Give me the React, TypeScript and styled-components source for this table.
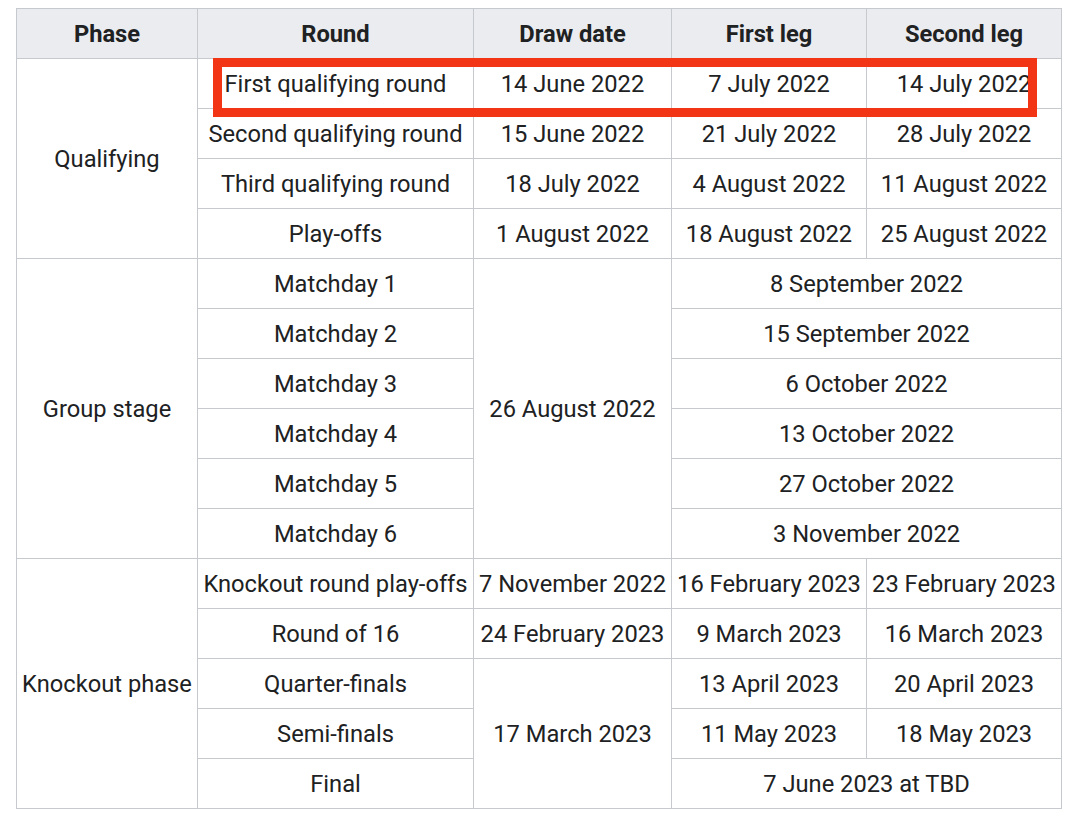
import React from "react";
import styled, { createGlobalStyle } from "styled-components";

const Global = createGlobalStyle`
  html, body { margin: 0; padding: 0; background: #ffffff; }
  body { font-family: Roboto, "Noto Sans", sans-serif; color: #202122; }
`;

const Page = styled.div`
  padding: 8px 0 0 16px;
`;

const Wrap = styled.div`
  position: relative;
  width: 1045px;
`;

const Table = styled.table`
  border-collapse: collapse;
  table-layout: fixed;
  width: 1045px;
  font-size: 23.7px;
  line-height: 28px;
`;

const Th = styled.th`
  background: #eaecf0;
  border: 1px solid #c6c9ce;
  height: 49px;
  padding: 0;
  font-weight: 700;
  text-align: center;
  color: #202122;
`;

const Td = styled.td`
  border: 1px solid #c6c9ce;
  height: 49px;
  padding: 0;
  text-align: center;
  white-space: nowrap;
  color: #202122;
`;

const Highlight = styled.div`
  position: absolute;
  left: 197px;
  top: 50px;
  width: 824px;
  height: 59px;
  box-sizing: border-box;
  border: 9px solid #f23514;
  pointer-events: none;
`;

type Row = { phase?: [string, number]; round: string; draw?: [string, number]; legs: string[] };

const rows: Row[] = [
  { phase: ["Qualifying", 4], round: "First qualifying round", draw: ["14 June 2022", 1], legs: ["7 July 2022", "14 July 2022"] },
  { round: "Second qualifying round", draw: ["15 June 2022", 1], legs: ["21 July 2022", "28 July 2022"] },
  { round: "Third qualifying round", draw: ["18 July 2022", 1], legs: ["4 August 2022", "11 August 2022"] },
  { round: "Play-offs", draw: ["1 August 2022", 1], legs: ["18 August 2022", "25 August 2022"] },
  { phase: ["Group stage", 6], round: "Matchday 1", draw: ["26 August 2022", 6], legs: ["8 September 2022"] },
  { round: "Matchday 2", legs: ["15 September 2022"] },
  { round: "Matchday 3", legs: ["6 October 2022"] },
  { round: "Matchday 4", legs: ["13 October 2022"] },
  { round: "Matchday 5", legs: ["27 October 2022"] },
  { round: "Matchday 6", legs: ["3 November 2022"] },
  { phase: ["Knockout phase", 5], round: "Knockout round play-offs", draw: ["7 November 2022", 1], legs: ["16 February 2023", "23 February 2023"] },
  { round: "Round of 16", draw: ["24 February 2023", 1], legs: ["9 March 2023", "16 March 2023"] },
  { round: "Quarter-finals", draw: ["17 March 2023", 3], legs: ["13 April 2023", "20 April 2023"] },
  { round: "Semi-finals", legs: ["11 May 2023", "18 May 2023"] },
  { round: "Final", legs: ["7 June 2023 at TBD"] },
];

export default function App() {
  return (
    <>
      <Global />
      <Page>
        <Wrap>
          <Table>
            <colgroup>
              <col style={{ width: 181 }} />
              <col style={{ width: 276 }} />
              <col style={{ width: 198 }} />
              <col style={{ width: 195 }} />
              <col style={{ width: 195 }} />
            </colgroup>
            <thead>
              <tr>
                <Th>Phase</Th>
                <Th>Round</Th>
                <Th>Draw date</Th>
                <Th>First leg</Th>
                <Th>Second leg</Th>
              </tr>
            </thead>
            <tbody>
              {rows.map((r) => (
                <tr key={r.round}>
                  {r.phase && <Td rowSpan={r.phase[1]}>{r.phase[0]}</Td>}
                  <Td>{r.round}</Td>
                  {r.draw && <Td rowSpan={r.draw[1]}>{r.draw[0]}</Td>}
                  {r.legs.length === 1 ? (
                    <Td colSpan={2}>{r.legs[0]}</Td>
                  ) : (
                    r.legs.map((l) => <Td key={l}>{l}</Td>)
                  )}
                </tr>
              ))}
            </tbody>
          </Table>
          <Highlight />
        </Wrap>
      </Page>
    </>
  );
}
